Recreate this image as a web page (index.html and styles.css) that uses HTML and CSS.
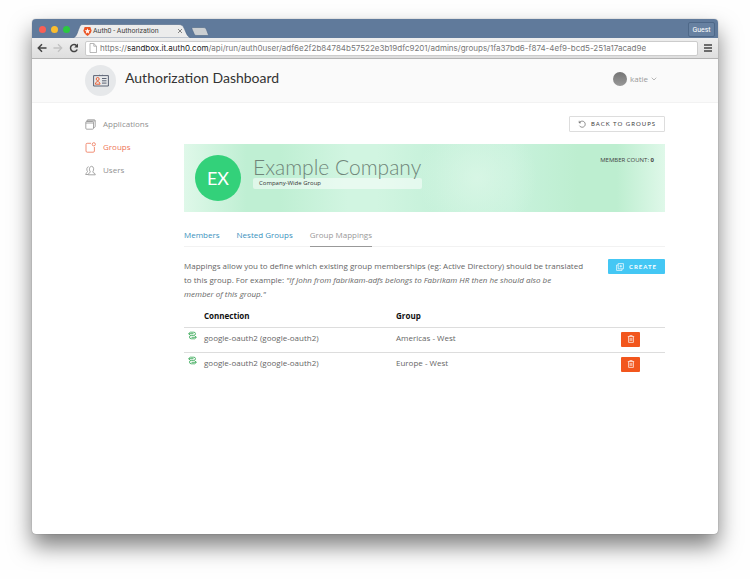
FILE: index.html
```html
<!DOCTYPE html>
<html lang="en">
<head>
<meta charset="utf-8">
<meta name="viewport" content="width=device-width, initial-scale=1">
<title>Auth0 - Authorization</title>
<link rel="stylesheet" href="styles.css">
</head>
<body>
<div class="window">
  <div class="titlebar">
    <div class="lights"><span class="light red"></span><span class="light amber"></span><span class="light green"></span></div>
    <div class="tab">
      <svg class="tab-shape" viewBox="0 0 118 14" preserveAspectRatio="none" aria-hidden="true"><path d="M0 14C3 13 4 10 5 7C7 2 7 .5 10 .5H106C109 .5 110 2 111 4C113 8 114 13 118 14Z" fill="#ececec" stroke="#4d6786" stroke-width=".6"/></svg>
      <svg class="favicon" viewBox="0 0 10 11" aria-hidden="true"><path d="M1.500 0H8.500L9.800 4C10 6.500 8.500 8.500 5 11C1.500 8.500 0 6.500 .2 4Z" fill="#eb5424"/><path d="M5 1.500L5.900 4H8.500L6.400 5.700L7.200 8.300L5 6.700L2.800 8.300L3.600 5.700L1.500 4H4.100Z" fill="#fff"/></svg>
      <span class="tab-title">Auth0 - Authorization</span>
      <svg class="tab-close" viewBox="0 0 6 6" aria-hidden="true"><path d="M1 1L5 5M5 1L1 5" stroke="#777" stroke-width=".9"/></svg>
    </div>
    <svg class="new-tab" viewBox="0 0 18 9" aria-hidden="true"><path d="M2 .5H12C14 .5 15 1 15.600 3L17.300 7.500C17.500 8.300 17 8.500 16.500 8.500H6C4 8.500 3.500 8 3 6.500L1 2C.7 1 1 .5 2 .5Z" fill="#cbcfd2" stroke="#4d6786" stroke-width=".6"/></svg>
    <button class="guest" type="button">Guest</button>
  </div>
  <div class="toolbar">
    <button class="tool" type="button" aria-label="Back"><svg viewBox="0 0 10 10"><path d="M9.500 5H1.500M5 1.300L1.300 5L5 8.700" fill="none" stroke="#444" stroke-width="1.500"/></svg></button>
    <button class="tool" type="button" aria-label="Forward"><svg viewBox="0 0 10 10"><path d="M.5 5H8.500M5 1.300L8.700 5L5 8.700" fill="none" stroke="#c2c2c2" stroke-width="1.300"/></svg></button>
    <button class="tool" type="button" aria-label="Reload"><svg viewBox="0 0 10 10"><path d="M8.200 6.500A3.500 3.500 0 1 1 7.600 2.700" fill="none" stroke="#444" stroke-width="1.500"/><path d="M9 .6V4.400H5.200Z" fill="#444"/></svg></button>
    <div class="address">
      <svg viewBox="0 0 8 10" aria-hidden="true"><path d="M1 .5H4.800L7.500 3.200V9.500H1ZM4.800 .5V3.200H7.500" fill="#fff" stroke="#999" stroke-width=".7"/></svg>
      <span class="url">https://<b>sandbox.it.auth0.com</b>/api/run/auth0user/adf6e2f2b84784b57522e3b19dfc9201/admins/groups/1fa37bd6-f874-4ef9-bcd5-251a17acad9e</span>
    </div>
    <button class="menu" type="button" aria-label="Menu"><svg viewBox="0 0 8 8"><path d="M0 1H8M0 4H8M0 7H8" stroke="#444" stroke-width="1.500"/></svg></button>
  </div>

  <header class="header">
    <div class="container header-row">
      <span class="logo"><svg viewBox="0 0 16 13" aria-hidden="true"><path d="M.6 1.600H6.500V.8M9.500 .8V1.600H15.400V12H.6V1.600M6.500 1.600H9.500" fill="none" stroke="#4c5568" stroke-width=".9"/><circle cx="4.700" cy="5" r="1.500" fill="none" stroke="#eb5424" stroke-width=".9"/><path d="M2.400 10.200C2.400 6.700 7 6.700 7 10.200Z" fill="none" stroke="#eb5424" stroke-width=".9"/><path d="M9 4.500H13.500M9 6.800H13.500M9 9.100H13.500" stroke="#4c5568" stroke-width=".9"/></svg></span>
      <h1 class="title">Authorization Dashboard</h1>
      <button class="user" type="button"><span class="avatar"></span>katie<svg viewBox="0 0 6 4" aria-hidden="true"><path d="M.7 .7L3 3L5.300 .7" fill="none" stroke="#999" stroke-width=".7"/></svg></button>
    </div>
  </header>

  <div class="container layout">
    <nav class="sidebar">
      <a href="#"><svg viewBox="0 0 11 11" aria-hidden="true"><path d="M.8 4H8.500V9.300Q8.500 10.200 7.600 10.200H1.700Q.8 10.200 .8 9.300ZM.8 4V3.300Q.8 2.500 1.600 2.500H7.700Q8.500 2.500 8.500 3.300V4M2 2.500V1.600Q2 .8 2.800 .8H9.400Q10.200 .8 10.200 1.600V7.600Q10.200 8.500 8.500 8.500M2 1.900H10.200" fill="none" stroke="currentColor" stroke-width=".8"/></svg>Applications</a>
      <a href="#" class="current"><svg viewBox="0 0 11 11" aria-hidden="true"><path d="M6 1.300H2.200Q1 1.300 1 2.500V9Q1 10.200 2.200 10.200H8.200Q9.400 10.200 9.400 9V5" fill="none" stroke="currentColor" stroke-width=".8"/><circle cx="8.800" cy="2.300" r="1.600" fill="none" stroke="currentColor" stroke-width=".8"/></svg>Groups</a>
      <a href="#"><svg viewBox="0 0 11 11" aria-hidden="true"><path d="M3 9.500H.7C.7 7.500 2.500 8 2.500 6.500C1.300 5 1.600 2 3.600 1.700M3.200 9.800C3.200 7.700 5.300 8.300 5.300 6.800C3.700 4.800 4.400 1.300 6.600 1.300C8.800 1.300 9.300 4.800 7.800 6.800C7.800 8.300 10.300 7.700 10.300 9.800Z" fill="none" stroke="currentColor" stroke-width=".8"/></svg>Users</a>
    </nav>

    <main class="main">
      <div class="actions"><button class="back" type="button"><svg viewBox="0 0 8 8" aria-hidden="true"><path d="M1 2.800H3M1.200 .8V2.800C3 0 7.200 .9 7.200 4.200C7.200 7.500 3 8.300 1.500 5.700" fill="none" stroke="#666" stroke-width=".7"/></svg>BACK TO GROUPS</button></div>

      <section class="banner">
        <span class="badge">EX</span>
        <div class="identity">
          <h2>Example Company</h2>
          <p>Company-Wide Group</p>
        </div>
        <p class="count">MEMBER COUNT: <b>0</b></p>
      </section>

      <nav class="tabs">
        <a href="#">Members</a>
        <a href="#">Nested Groups</a>
        <a href="#" class="active">Group Mappings</a>
      </nav>

      <div class="intro">
        <p>Mappings allow you to define which existing group memberships (eg: Active Directory) should be translated to this group. For example: <em>"If John from fabrikam-adfs belongs to Fabrikam HR then he should also be<br>member of this group."</em></p>
        <button class="create" type="button"><svg viewBox="0 0 8 8" aria-hidden="true"><path d="M2.200 .6H7.400V5.800H2.200ZM2.200 2H.6V7.400H6V5.800M4.800 1.900V4.500M3.500 3.200H6.100" fill="none" stroke="#fff" stroke-width=".7"/></svg>CREATE</button>
      </div>

      <table class="mappings">
        <thead><tr><th class="c-icon"></th><th class="c-conn">Connection</th><th>Group</th><th class="c-action"></th></tr></thead>
        <tbody>
          <tr>
            <td><svg class="sync" viewBox="0 0 9 9" aria-hidden="true"><path d="M2.300 4.200L.6 2.700L2.300 1.200H5.800Q7.500 1.200 7.500 2.700Q7.500 4.400 5.800 4.400H3.200Q1.500 4.400 1.500 6Q1.500 7.800 3.200 7.800H6.700L8.400 6.300L6.700 4.800M.8 2.700H5.500M8.200 6.300H3.500" fill="none" stroke="#43ae60" stroke-width=".9"/></svg></td>
            <td>google-oauth2 (google-oauth2)</td><td>Americas - West</td>
            <td class="action"><button class="delete" type="button" aria-label="Delete Americas - West"><svg viewBox="0 0 8 8" aria-hidden="true"><path d="M.8 1.600H7.200M2.800 1.600V.6H5.200V1.600M1.600 1.600V7.400H6.400V1.600M3.200 3V6M4.800 3V6" fill="none" stroke="#fff" stroke-width=".7"/></svg></button></td>
          </tr>
          <tr>
            <td><svg class="sync" viewBox="0 0 9 9" aria-hidden="true"><path d="M2.300 4.200L.6 2.700L2.300 1.200H5.800Q7.500 1.200 7.500 2.700Q7.500 4.400 5.800 4.400H3.200Q1.500 4.400 1.500 6Q1.500 7.800 3.200 7.800H6.700L8.400 6.300L6.700 4.800M.8 2.700H5.500M8.200 6.300H3.500" fill="none" stroke="#43ae60" stroke-width=".9"/></svg></td>
            <td>google-oauth2 (google-oauth2)</td><td>Europe - West</td>
            <td class="action"><button class="delete" type="button" aria-label="Delete Europe - West"><svg viewBox="0 0 8 8" aria-hidden="true"><path d="M.8 1.600H7.200M2.800 1.600V.6H5.200V1.600M1.600 1.600V7.400H6.400V1.600M3.200 3V6M4.800 3V6" fill="none" stroke="#fff" stroke-width=".7"/></svg></button></td>
          </tr>
        </tbody>
      </table>
    </main>
  </div>
</div>
</body>
</html>
```

FILE: styles.css
```css
* { box-sizing: border-box; }
body {
  margin: 0;
  padding: 19px 32px 45px;
  min-height: 100vh;
  display: flex;
  background: #fefefe;
  font-family: "Open Sans", "Liberation Sans", sans-serif;
  font-size: 8px;
  line-height: 14px;
  color: #666;
}
h1, h2, p { margin: 0; font-weight: 400; }
a { text-decoration: none; color: inherit; }
button { font: inherit; color: inherit; background: none; border: 0; padding: 0; }
svg { display: block; flex: none; }

.window {
  flex: 1;
  min-width: 0;
  background: #fff;
  border-radius: 4px;
  box-shadow: 0 0 1px rgba(0, 0, 0, .5), 0 12px 22px rgba(0, 0, 0, .5);
}

/* Browser chrome */
.titlebar {
  display: flex;
  align-items: flex-end;
  height: 19px;
  padding-right: 3px;
  background: #607a9b;
  border-radius: 4px 4px 0 0;
  font-family: Roboto, sans-serif;
}
.lights { display: flex; gap: 5px; padding: 0 3px 5px 7px; }
.light { width: 7px; height: 7px; border-radius: 50%; }
.red { background: #f95f55; }
.amber { background: #fbbd2e; }
.green { background: #2bc840; }
.tab {
  position: relative;
  display: flex;
  align-items: center;
  width: 118px;
  height: 14px;
  padding: 0 8px 0 10px;
}
.tab-shape { position: absolute; inset: 0; width: 100%; height: 100%; }
.favicon { position: relative; width: 9px; height: 9px; }
.tab-title { position: relative; flex: 1; padding-left: 1px; color: #444; font-size: 7px; }
.tab-close { position: relative; width: 6px; height: 6px; }
.new-tab { width: 18px; height: 9px; margin-bottom: 2px; }
.guest {
  margin: 0 0 1px auto;
  width: 27px;
  height: 15px;
  border: 1px solid #4e6888;
  border-radius: 2px;
  background: #6781a1;
  color: #fff;
  font-size: 7px;
  line-height: 12px;
}
.toolbar {
  display: flex;
  align-items: center;
  gap: 6px;
  height: 21px;
  padding: 0 6px 0 5px;
  background: linear-gradient(#eee, #dedede);
  border-bottom: 1px solid #b4b4b4;
}
.tool svg { width: 10px; height: 10px; }
.address {
  flex: 1;
  min-width: 0;
  display: flex;
  align-items: center;
  gap: 3px;
  height: 15px;
  padding: 0 3px;
  background: #fff;
  border: 1px solid #ccc;
  border-radius: 2px;
  font-family: Inter, sans-serif;
  font-size: 8px;
  color: #777;
}
.address svg { width: 8px; height: 10px; }
.url { overflow: hidden; white-space: nowrap; }
.url b { font-weight: 400; color: #222; }
.menu svg { width: 8px; height: 8px; }

/* Page */
.container { max-width: 580px; margin: 0 auto; }
.header { background: #fafafa; border-bottom: 1px solid #f2f2f2; }
.header-row { display: flex; align-items: center; height: 43px; padding-bottom: 1px; }
.logo {
  display: grid;
  place-items: center;
  width: 31px;
  height: 31px;
  border-radius: 50%;
  background: #e6e8ea;
}
.logo svg { width: 16px; height: 13px; }
.title { flex: 1; padding: 0 0 4px 9px; font-family: Lato, sans-serif; font-size: 14px; line-height: 18px; color: #333; }
.user { display: flex; align-items: center; gap: 3px; padding: 0 8px 2px 0; color: #999; }
.avatar { width: 14px; height: 14px; border-radius: 50%; background: linear-gradient(#747474, #999); }
.user svg { width: 6px; height: 4px; }

.layout { display: flex; padding-top: 13px; }
.sidebar { display: flex; flex-direction: column; gap: 9px; width: 99px; padding-top: 1px; color: #919191; }
.sidebar a { display: flex; align-items: center; gap: 7px; }
.sidebar svg { width: 11px; height: 11px; }
.sidebar .current { color: #ee7557; }
.main { flex: 1; min-width: 0; }
.actions { display: flex; justify-content: flex-end; }
.back {
  display: flex;
  align-items: center;
  gap: 5px;
  height: 16px;
  padding: 0 8px;
  border: 1px solid #ddd;
  border-radius: 1px;
  font-family: Lato, sans-serif;
  font-size: 6px;
  letter-spacing: 1px;
  color: #444;
}
.back svg, .create svg { width: 8px; height: 8px; }

.banner {
  display: flex;
  align-items: flex-start;
  gap: 12px;
  margin-top: 12px;
  padding: 11px;
  background:
    radial-gradient(circle at 61% 50%, rgba(219, 247, 231, .8), rgba(219, 247, 231, 0) 60px),
    linear-gradient(90deg, #dff8e9, #bfefd3 13%, #bfefd3 20%, #d1f5e1 34%, #d1f5e1 40%, #c6f1da 52%, #c8f2dc 68%, #bdeed0 82%, #bdeed0 90%, #dff8e9);
}
.badge {
  display: grid;
  place-items: center;
  flex: none;
  width: 46px;
  height: 46px;
  border-radius: 50%;
  background: #33d17a;
  color: #fff;
  font-family: Lato, sans-serif;
  font-size: 18px;
}
.identity { width: 169px; }
.identity h2 { font-family: Lato, sans-serif; font-size: 21px; line-height: 23px; font-weight: 300; color: #6f8579; white-space: nowrap; }
.identity p { padding: 0 6px; background: rgba(255, 255, 255, .5); border-radius: 2px; font-size: 6px; line-height: 11px; color: #333; }
.count { margin-left: auto; font-size: 6px; line-height: 11px; color: #444; }

.tabs { display: flex; gap: 17px; margin-top: 16px; border-bottom: 1px solid #f2f2f2; color: #3a91bd; }
.tabs a { padding-bottom: 4px; margin-bottom: -1px; border-bottom: 1px solid transparent; }
.tabs .active { color: #999; border-color: #999; }

.intro { display: flex; justify-content: space-between; align-items: flex-start; gap: 16px; margin-top: 12px; }
.intro p { max-width: 400px; }
.create {
  display: flex;
  align-items: center;
  gap: 5px;
  flex: none;
  height: 15px;
  padding: 0 8px;
  background: #44c7f4;
  border-radius: 1px;
  color: #fff;
  font-family: Lato, sans-serif;
  font-size: 6px;
  font-weight: 700;
  letter-spacing: 1px;
}

.mappings { width: 100%; margin-top: 4px; table-layout: fixed; border-collapse: collapse; }
.mappings th, .mappings td { padding: 3px 0; height: 25px; text-align: left; vertical-align: top; }
.mappings th { height: 22px; padding-top: 4px; color: #111; font-weight: 700; }
.mappings .action { padding-top: 4px; }
.mappings tbody tr { border-top: 1px solid #ddd; }
.c-icon { width: 20px; }
.c-conn { width: 192px; }
.c-action { width: 44px; }
.sync { width: 9px; height: 9px; margin-left: 4px; }
.delete { display: grid; place-items: center; width: 19px; height: 15px; background: #f2561d; border-radius: 1px; }
.delete svg { width: 8px; height: 8px; }
```
